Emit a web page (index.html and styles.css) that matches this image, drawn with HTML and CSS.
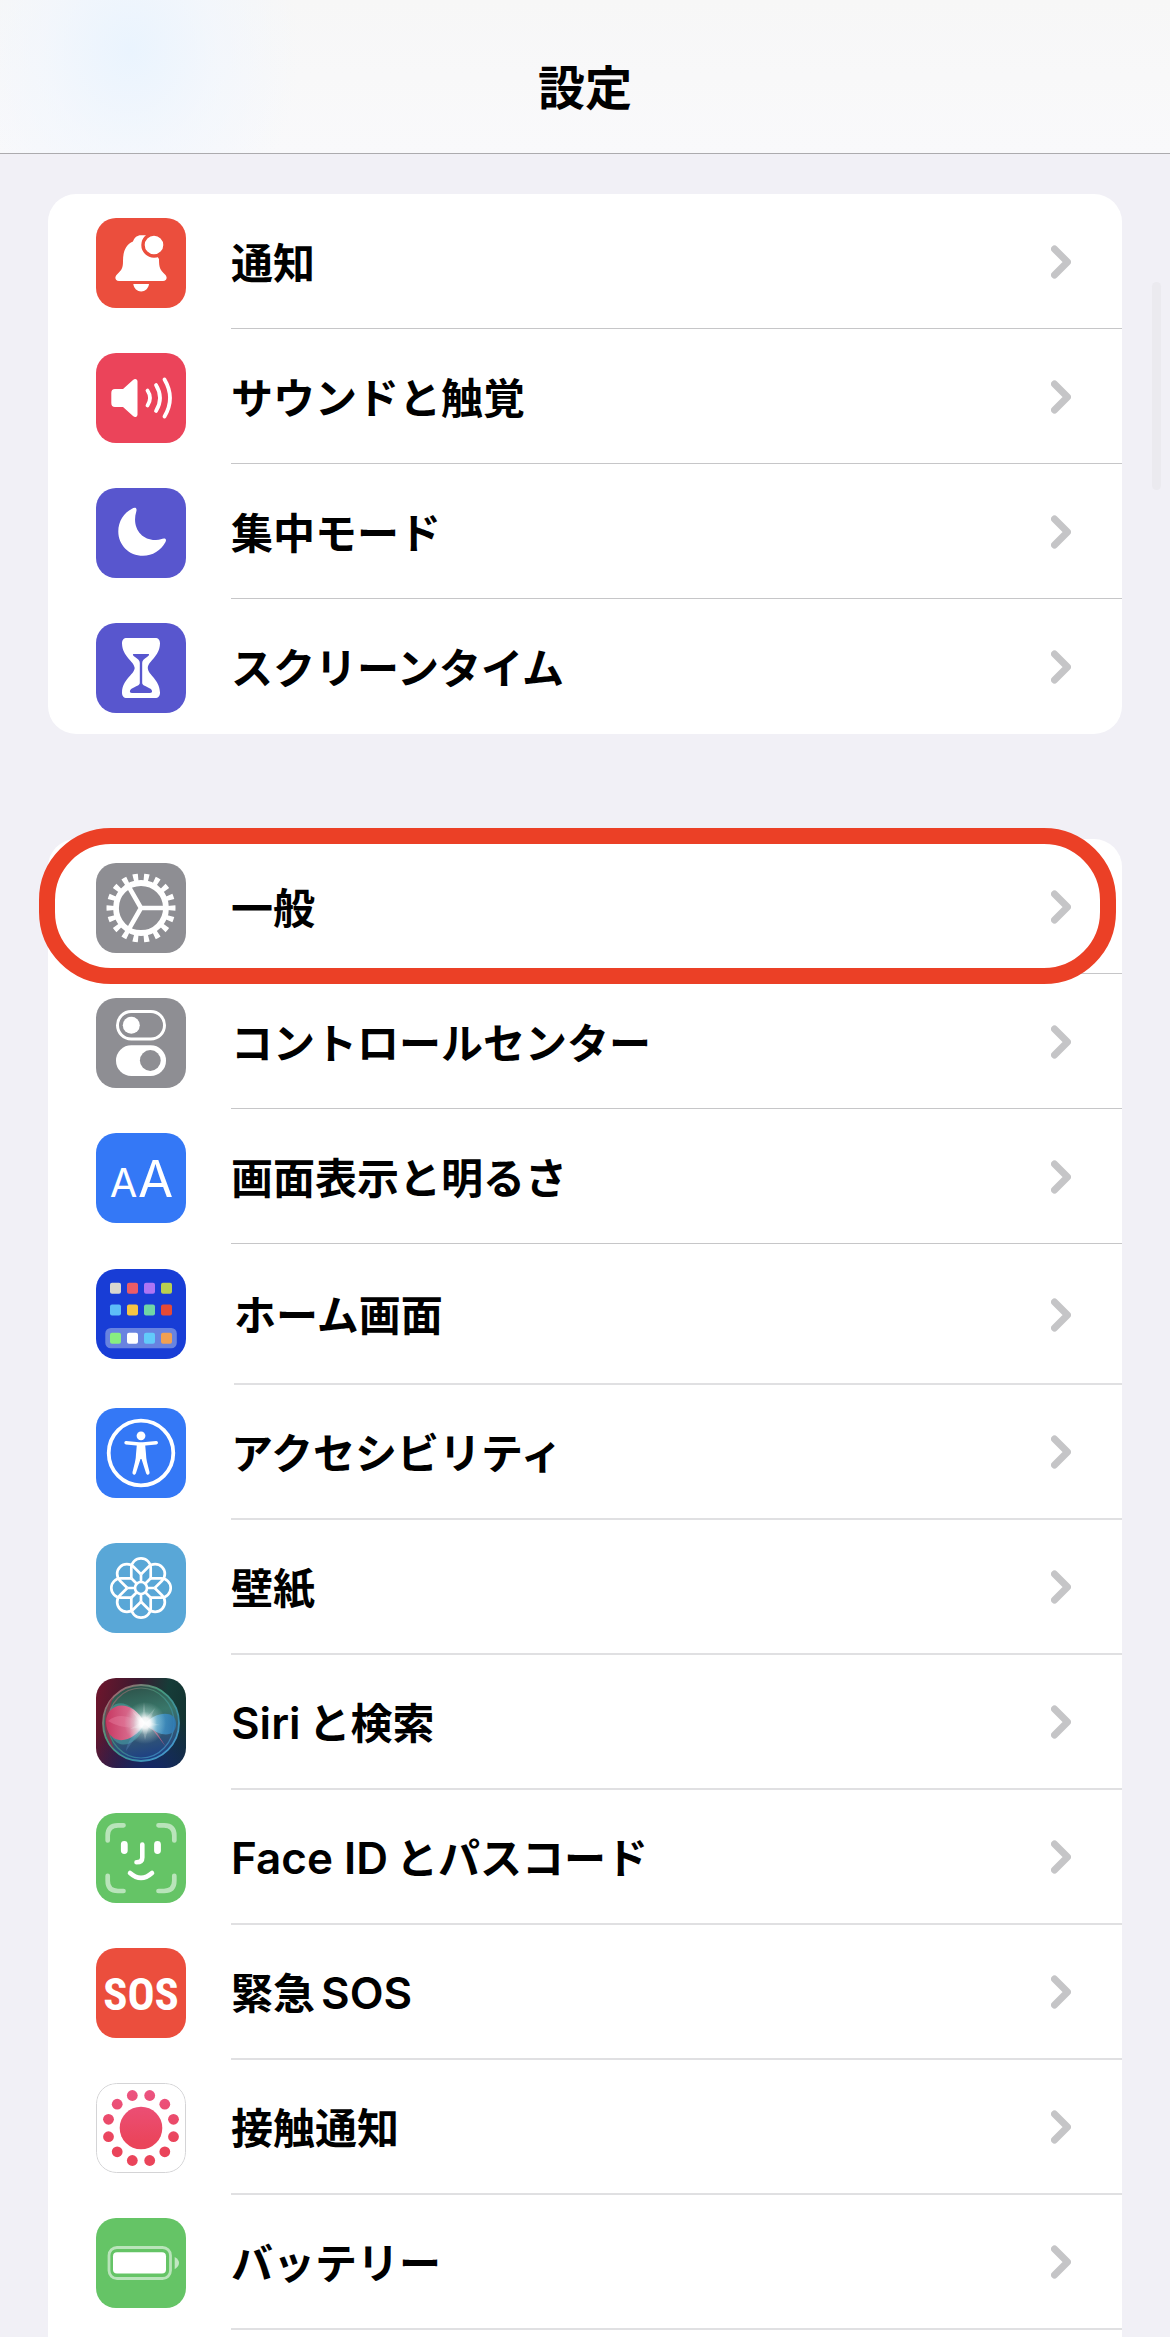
FILE: index.html
```html
<!DOCTYPE html>
<html lang="ja">
<head>
    <meta charset="UTF-8">
    <meta name="viewport" content="width=device-width, initial-scale=1.0">
    <title>設定</title>
    <link rel="stylesheet" href="styles.css">
</head>
<body>
    <!-- shared chevron -->
    <svg class="defs" width="0" height="0" aria-hidden="true">
        <symbol id="chevron" viewBox="0 0 20 34">
            <path d="M3.500 4 L16.500 17 L3.500 30" fill="none" stroke="#c5c5c7" stroke-width="7" stroke-linecap="round" stroke-linejoin="round"/>
        </symbol>
    </svg>

    <header class="navbar">
        <h1>設定</h1>
    </header>

    <main>
        <ul class="card">
            <li>
                <a class="row" href="#notifications">
                    <svg class="icon red" viewBox="0 0 90 90" aria-hidden="true">
                        <path d="M23 63 C19 63 18.300 59 21 56.500 C26 51.500 27 50 27 43 C27 33 30 26.500 37 23.500 C38.500 19.500 41 17.300 45 17.300 H50 L61 38 L63 41 C63 50 64 51.500 69 56.500 C71.700 59 71 63 67 63 Z" fill="#fff"/>
                        <circle cx="58" cy="27" r="11" fill="#fff" stroke="#eb4e3d" stroke-width="3.400"/>
                        <path d="M37.300 66 H53 C52.500 70.500 49 73.500 45.200 73.500 C41.300 73.500 37.800 70.500 37.300 66 Z" fill="#fff"/>
                    </svg>
                    <span class="row-body"><span class="label">通知</span><svg class="chevron"><use href="#chevron"/></svg></span>
                </a>
            </li>
            <li>
                <a class="row" href="#sounds">
                    <svg class="icon pink" viewBox="0 0 90 90" aria-hidden="true">
                        <path d="M19 36 H27 L37 27 C39 25.300 41.500 26 41.500 28.500 V61.500 C41.500 64 39 65 37 63 L27 54 H19 C16.500 54 15.300 52.700 15.300 50 V40 C15.300 37.300 16.500 36 19 36 Z" fill="#fff"/>
                        <g fill="none" stroke="#fff" stroke-width="3.800" stroke-linecap="round">
                            <path d="M51.500 37.500 Q56.500 45 51.500 52.500"/>
                            <path d="M60 32 Q68 45 60 58"/>
                            <path d="M68.500 26.500 Q79.500 45 68.500 63.500"/>
                        </g>
                    </svg>
                    <span class="row-body"><span class="label">サウンドと触覚</span><svg class="chevron"><use href="#chevron"/></svg></span>
                </a>
            </li>
            <li>
                <a class="row" href="#focus">
                    <svg class="icon indigo" viewBox="0 0 90 90" aria-hidden="true">
                        <path d="M36 20.800 C38.500 19 41.500 19.500 40.300 23.500 C35.500 39 45 52.500 60 52 C64 52 66 50.500 68 50.500 C70 50.500 70.500 52 69.500 54 C65 62.500 56.500 67.800 47 67.800 C33 67.800 22.300 57 22.300 43.500 C22.300 33.500 28 24.500 36 20.800 Z" fill="#fff"/>
                    </svg>
                    <span class="row-body"><span class="label">集中モード</span><svg class="chevron"><use href="#chevron"/></svg></span>
                </a>
            </li>
            <li>
                <a class="row" href="#screentime">
                    <svg class="icon indigo" viewBox="0 0 90 90" aria-hidden="true">
                        <path d="M31 15 H59 C62.500 15 64 17 64 20.500 C63.500 34 52 38 51.800 45 C52 52 63.500 56 64 69.500 C64 73 62.500 75 59 75 H31 C27.500 75 26 73 26 69.500 C26.500 56 38 52 38.700 45 C38 38 26.500 34 26 20.500 C26 17 27.500 15 31 15 Z" fill="#fff"/>
                        <path d="M38 31 H52 C54 31 53 32.500 51 34 C48 36 46.200 37.500 46.200 40 V60 C46.200 62.500 50 63 54 65.500 C56.500 67 57 70 54 70 H36 C33 70 33.500 67 36 65.500 C40 63 43.800 62.500 43.800 60 V40 C43.800 37.500 42 36 39 34 C37 32.500 36 31 38 31 Z" fill="#5856ce"/>
                    </svg>
                    <span class="row-body"><span class="label">スクリーンタイム</span><svg class="chevron"><use href="#chevron"/></svg></span>
                </a>
            </li>
        </ul>

        <ul class="card card-last">
            <li class="highlight">
                <a class="row" href="#general">
                    <svg class="icon gray" viewBox="0 0 90 90" aria-hidden="true">
                        <g fill="none" stroke="#fff">
                            <circle cx="45" cy="45" r="30.500" stroke-width="8" pathLength="180" stroke-dasharray="4.600 5.400" stroke-dashoffset="2.300"/>
                            <circle cx="45" cy="45" r="25" stroke-width="5.800"/>
                            <path d="M68 45 H43.500 M33 24.200 L45 45 L33 65.800" stroke-width="4.600"/>
                        </g>
                    </svg>
                    <span class="row-body"><span class="label">一般</span><svg class="chevron"><use href="#chevron"/></svg></span>
                </a>
            </li>
            <li>
                <a class="row" href="#controlcenter">
                    <svg class="icon gray" viewBox="0 0 90 90" aria-hidden="true">
                        <rect x="21.500" y="13.500" width="47" height="27.500" rx="13.700" fill="none" stroke="#fff" stroke-width="3"/>
                        <circle cx="35.300" cy="27.300" r="8.500" fill="#fff"/>
                        <rect x="20" y="47.300" width="50" height="30.700" rx="15.300" fill="#fff"/>
                        <circle cx="54.300" cy="62.500" r="10.400" fill="#8e8e93"/>
                    </svg>
                    <span class="row-body"><span class="label">コントロールセンター</span><svg class="chevron"><use href="#chevron"/></svg></span>
                </a>
            </li>
            <li>
                <a class="row" href="#display">
                    <svg class="icon blue" viewBox="0 0 90 90" aria-hidden="true">
                        <text class="glyph-a" x="27.500" y="64" font-size="40" text-anchor="middle">A</text>
                        <text class="glyph-a" x="59.500" y="64" font-size="51" text-anchor="middle">A</text>
                    </svg>
                    <span class="row-body"><span class="label">画面表示と明るさ</span><svg class="chevron"><use href="#chevron"/></svg></span>
                </a>
            </li>
            <li>
                <a class="row row-home" href="#home">
                    <svg class="icon navy" viewBox="0 0 90 90" aria-hidden="true">
                        <rect x="9.300" y="59" width="71.500" height="20.300" rx="5.500" fill="#6883e0"/>
                        <rect x="14" y="13.700" width="11" height="11" rx="2" fill="#d8d7cf"/>
                        <rect x="31" y="13.700" width="11" height="11" rx="2" fill="#ea5c67"/>
                        <rect x="48" y="13.700" width="11" height="11" rx="2" fill="#ad74f4"/>
                        <rect x="65" y="13.700" width="11" height="11" rx="2" fill="#b9d050"/>
                        <rect x="14" y="35.500" width="11" height="11" rx="2" fill="#5dbdf8"/>
                        <rect x="31" y="35.500" width="11" height="11" rx="2" fill="#f6c544"/>
                        <rect x="48" y="35.500" width="11" height="11" rx="2" fill="#70d6a6"/>
                        <rect x="65" y="35.500" width="11" height="11" rx="2" fill="#e64a37"/>
                        <rect x="14" y="63.700" width="11" height="11" rx="2" fill="#88ee80"/>
                        <rect x="31" y="63.700" width="11" height="11" rx="2" fill="#fff"/>
                        <rect x="48" y="63.700" width="11" height="11" rx="2" fill="#62cafa"/>
                        <rect x="65" y="63.700" width="11" height="11" rx="2" fill="#f0a052"/>
                    </svg>
                    <span class="row-body"><span class="label">ホーム画面</span><svg class="chevron"><use href="#chevron"/></svg></span>
                </a>
            </li>
            <li>
                <a class="row row-soft" href="#accessibility">
                    <svg class="icon blue" viewBox="0 0 90 90" aria-hidden="true">
                        <circle cx="45" cy="45" r="32.300" fill="none" stroke="#fff" stroke-width="3.800"/>
                        <circle cx="45" cy="27.800" r="4.400" fill="#fff"/>
                        <path d="M30 34.700 L43 36 H47 L60.300 34.700" fill="none" stroke="#fff" stroke-width="3.400" stroke-linecap="round"/>
                        <path d="M41 35 H49 L50 46 Q50 49 51 54 L53.500 64 C54 67 50.800 68 50 65 L45.500 51 H44.500 L40 65 C39.200 68 36 67 36.500 64 L39 54 Q40 49 40 46 Z" fill="#fff"/>
                    </svg>
                    <span class="row-body"><span class="label">アクセシビリティ</span><svg class="chevron"><use href="#chevron"/></svg></span>
                </a>
            </li>
            <li>
                <a class="row row-soft" href="#wallpaper">
                    <svg class="icon sky" viewBox="0 0 90 90" aria-hidden="true">
                        <g fill="none" stroke="#fff" stroke-width="2.700" stroke-linejoin="round">
                            <path id="petal" d="M35.300 35.300 V25 a9.700 9.700 0 0 1 19.400 0 V35.300 M45 31.300 V39"/>
                            <use href="#petal" transform="rotate(45 45 45)"/>
                            <use href="#petal" transform="rotate(90 45 45)"/>
                            <use href="#petal" transform="rotate(135 45 45)"/>
                            <use href="#petal" transform="rotate(180 45 45)"/>
                            <use href="#petal" transform="rotate(225 45 45)"/>
                            <use href="#petal" transform="rotate(270 45 45)"/>
                            <use href="#petal" transform="rotate(315 45 45)"/>
                            <circle cx="45" cy="45" r="6"/>
                        </g>
                    </svg>
                    <span class="row-body"><span class="label">壁紙</span><svg class="chevron"><use href="#chevron"/></svg></span>
                </a>
            </li>
            <li>
                <a class="row row-soft" href="#siri">
                    <svg class="icon siri" viewBox="0 0 90 90" aria-hidden="true">
                        <defs>
                            <linearGradient id="siri-ring" x1="0" y1="0" x2="1" y2="1">
                                <stop offset="0" stop-color="#c4526b"/>
                                <stop offset="0.400" stop-color="#479b7c"/>
                                <stop offset="0.700" stop-color="#3c8fa8"/>
                                <stop offset="1" stop-color="#4aa0e8"/>
                            </linearGradient>
                            <linearGradient id="siri-ball" x1="0.300" y1="0" x2="0.500" y2="1">
                                <stop offset="0" stop-color="#2c4f47"/>
                                <stop offset="0.400" stop-color="#39776a"/>
                                <stop offset="0.650" stop-color="#365a70"/>
                                <stop offset="1" stop-color="#1c3f86"/>
                            </linearGradient>
                            <linearGradient id="siri-pink" x1="0" y1="0" x2="1" y2="0">
                                <stop offset="0" stop-color="#c83862"/>
                                <stop offset="0.600" stop-color="#d76a8c"/>
                                <stop offset="1" stop-color="#ffffff"/>
                            </linearGradient>
                            <linearGradient id="siri-blue" x1="0" y1="0" x2="1" y2="0">
                                <stop offset="0" stop-color="#ffffff"/>
                                <stop offset="0.400" stop-color="#4a9fd0"/>
                                <stop offset="1" stop-color="#2c78b4"/>
                            </linearGradient>
                            <radialGradient id="siri-glow">
                                <stop offset="0" stop-color="#fff"/>
                                <stop offset="0.250" stop-color="#fff" stop-opacity="0.900"/>
                                <stop offset="0.550" stop-color="#d8f4f0" stop-opacity="0.350"/>
                                <stop offset="1" stop-color="#d8f4f0" stop-opacity="0"/>
                            </radialGradient>
                        </defs>
                        <circle cx="45" cy="45" r="38" fill="url(#siri-ball)" stroke="url(#siri-ring)" stroke-width="1.800"/>
                        <path d="M17 19 C7 31 5 57 18 71 C12 55 12 34 17 19 Z" fill="#a02745" opacity="0.700"/>
                        <ellipse cx="45" cy="45" rx="33" ry="35" fill="none" stroke="url(#siri-ring)" stroke-width="1.200" opacity="0.700"/>
                        <path d="M49 46 C34 18 12 20 12 42 C12 74 40 74 49 46 Z" fill="#4cabb0" opacity="0.500"/>
                        <path d="M49 45 C34 18 10 26 10 44 C11 68 36 68 49 45 Z" fill="url(#siri-pink)"/>
                        <path d="M12 43 C23 33 37 40 49 46 C36 52 24 50 12 43 Z" fill="#ef8cad" opacity="0.350"/>
                        <path d="M49 46 C58 34 80 31 80 46 C80 59 65 61 49 46 Z" fill="url(#siri-blue)" opacity="0.850"/>
                        <path d="M56 51 L70 69 L61 55 L50 45 Z" fill="#c16087" opacity="0.800"/>
                        <path d="M40 27 L49 46 L30 73 Q31 60 49 46" fill="#74a8df" opacity="0.250"/>
                        <circle cx="49" cy="45" r="21" fill="url(#siri-glow)"/>
                        <path d="M48 24 L50 40 L59 30 L53 44 L64 47 L53 48 L49 62 L46 49 L34 51 L44 45 L36 33 L46 41 Z" fill="#fff" opacity="0.200"/>
                    </svg>
                    <span class="row-body"><span class="label"><span class="latin">Siri</span>と検索</span><svg class="chevron"><use href="#chevron"/></svg></span>
                </a>
            </li>
            <li>
                <a class="row row-soft" href="#faceid">
                    <svg class="icon green" viewBox="0 0 90 90" aria-hidden="true">
                        <g fill="none" stroke="#fff" stroke-linecap="round">
                            <path d="M27.500 12.300 H22 Q11.700 12.300 11.700 22.500 V27.500 M62.500 12.300 H68 Q78.300 12.300 78.300 22.500 V27.500 M27.500 78 H22 Q11.700 78 11.700 67.800 V62.800 M62.500 78 H68 Q78.300 78 78.300 67.800 V62.800" stroke-width="4.700" opacity="0.550"/>
                            <path d="M28.300 31.500 V37.500 M61.500 31.500 V37.500" stroke-width="6.800"/>
                            <path d="M46.300 31.500 V44.500 Q46.300 49.300 40.500 49.300" stroke-width="4.600"/>
                            <path d="M34 60 Q45 69.800 56 60" stroke-width="4.600"/>
                        </g>
                    </svg>
                    <span class="row-body"><span class="label"><span class="latin">Face ID</span>とパスコード</span><svg class="chevron"><use href="#chevron"/></svg></span>
                </a>
            </li>
            <li>
                <a class="row row-soft" href="#sos">
                    <svg class="icon red" viewBox="0 0 90 90" aria-hidden="true">
                        <text class="glyph-sos" x="45" y="62" font-size="45" text-anchor="middle">SOS</text>
                    </svg>
                    <span class="row-body"><span class="label">緊急<span class="latin-end">SOS</span></span><svg class="chevron"><use href="#chevron"/></svg></span>
                </a>
            </li>
            <li>
                <a class="row row-soft" href="#exposure">
                    <svg class="icon exposure" viewBox="0 0 90 90" aria-hidden="true">
                        <defs>
                            <linearGradient id="exposure-fill" gradientUnits="userSpaceOnUse" x1="0" y1="6" x2="0" y2="60">
                                <stop offset="0" stop-color="#ec5482"/>
                                <stop offset="1" stop-color="#ea445a"/>
                            </linearGradient>
                        </defs>
                        <rect x="0.500" y="0.500" width="89" height="89" rx="20" fill="#fff" stroke="#d4d4d6"/>
                        <circle cx="45" cy="45" r="21.300" fill="url(#exposure-fill)"/>
                        <g fill="url(#exposure-fill)">
                            <circle cx="53.700" cy="12.500" r="5.400"/>
                            <circle cx="68.800" cy="21.200" r="5.400"/>
                            <circle cx="77.500" cy="36.300" r="5.400"/>
                            <circle cx="77.500" cy="53.700" r="5.400"/>
                            <circle cx="68.800" cy="68.800" r="5.400"/>
                            <circle cx="53.700" cy="77.500" r="5.400"/>
                            <circle cx="36.300" cy="77.500" r="5.400"/>
                            <circle cx="21.200" cy="68.800" r="5.400"/>
                            <circle cx="12.500" cy="53.700" r="5.400"/>
                            <circle cx="12.500" cy="36.300" r="5.400"/>
                            <circle cx="21.200" cy="21.200" r="5.400"/>
                            <circle cx="36.300" cy="12.500" r="5.400"/>
                        </g>
                    </svg>
                    <span class="row-body"><span class="label">接触通知</span><svg class="chevron"><use href="#chevron"/></svg></span>
                </a>
            </li>
            <li>
                <a class="row row-soft" href="#battery">
                    <svg class="icon green" viewBox="0 0 90 90" aria-hidden="true">
                        <rect x="13" y="29.500" width="61.500" height="31" rx="8" fill="none" stroke="#fff" stroke-width="2.800" opacity="0.550"/>
                        <rect x="17" y="34.300" width="53" height="21.200" rx="4" fill="#fff"/>
                        <path d="M78.700 39 Q83 41.500 83 45 Q83 48.500 78.700 51.300 Z" fill="#fff" opacity="0.600"/>
                    </svg>
                    <span class="row-body"><span class="label">バッテリー</span><svg class="chevron"><use href="#chevron"/></svg></span>
                </a>
            </li>
        </ul>
        <div class="scrollbar"></div>
    </main>
</body>
</html>
```
FILE: styles.css
```css
* {
    box-sizing: border-box;
}

body {
    margin: 0;
    min-height: 100vh;
    display: flex;
    flex-direction: column;
    background: #f1f0f6;
    color: #000;
    font-family: 'Inter', 'Noto Sans CJK JP', sans-serif;
}

.defs {
    position: absolute;
}

.navbar {
    height: 154px;
    padding-top: 53px;
    border-bottom: 1px solid #acabae;
    background:
        radial-gradient(ellipse 170px 200px at 130px 50px, #eaf4fe, rgba(240, 246, 254, 0.6) 50%, rgba(247, 248, 250, 0)),
        linear-gradient(#f7f7f7, #f9f9fb);
    text-align: center;
}

.navbar h1 {
    margin: 0;
    font-size: 47px;
    line-height: 70px;
    font-weight: 700;
}

main {
    position: relative;
    flex: 1;
    display: flex;
    flex-direction: column;
    gap: 105px;
    padding: 40px 48px 0;
}

.card {
    margin: 0;
    padding: 0;
    list-style: none;
    background: #fff;
    border-radius: 28px;
}

.card-last {
    flex: 1;
    border-radius: 28px 28px 0 0;
}

.row {
    display: flex;
    align-items: center;
    gap: 45px;
    height: 135px;
    padding-left: 48px;
    color: inherit;
    text-decoration: none;
}

.icon {
    flex: none;
    width: 90px;
    height: 90px;
    margin-top: 3px;
    border-radius: 20px;
}

.row-body {
    flex: 1;
    align-self: stretch;
    display: flex;
    align-items: center;
    justify-content: space-between;
    padding: 2px 51px 0 0;
    border-bottom: 1px solid #c6c6c8;
}

.card:not(.card-last) li:last-child .row-body {
    border-bottom-color: transparent;
}

/* lighter two pixel separators */
.row-soft .row-body,
.row-home .row-body {
    margin-bottom: -1px;
    border-bottom: 2px solid #e0e0e2;
}

.row-home {
    height: 140px;
    gap: 48px;
}

.row-home .icon {
    margin-top: 0;
}

.label {
    padding-top: 3px;
    font-size: 42px;
    line-height: 60px;
    font-weight: 700;
}

.latin,
.latin-end {
    font-size: 44px;
    font-weight: 600;
}

.latin {
    margin-right: 8px;
}

.latin-end {
    margin-left: 6px;
}

.chevron {
    width: 20px;
    height: 34px;
}

/* red outline around the row to tap */
.highlight {
    position: relative;
}

.highlight::after {
    content: '';
    position: absolute;
    top: -11px;
    right: 6px;
    bottom: -10px;
    left: -9px;
    border: 16px solid #eb4026;
    border-radius: 72px;
    pointer-events: none;
}

.scrollbar {
    position: absolute;
    top: 128px;
    right: 9px;
    width: 9px;
    height: 208px;
    border-radius: 5px;
    background: #ebeaef;
}

.red { background: #eb4e3d; }
.pink { background: #eb445a; }
.indigo { background: #5856ce; }
.gray { background: #8e8e93; }
.blue { background: #3478f6; }
.navy { background: #183dd6; }
.sky { background: #59a7d7; }
.green { background: #65c466; }

.siri {
    background:
        radial-gradient(circle at 60% 110%, #14246c, rgba(20, 36, 108, 0) 60%),
        linear-gradient(100deg, #70152c, #3c1a30 40%, #163c38 70%, #12302e);
}

.glyph-a {
    fill: #fff;
    font-family: 'Inter', sans-serif;
    font-weight: 400;
}

.glyph-sos {
    fill: #fff;
    font-family: 'Liberation Sans Narrow', 'Roboto Condensed', 'Roboto', sans-serif;
    font-weight: 700;
}
```
